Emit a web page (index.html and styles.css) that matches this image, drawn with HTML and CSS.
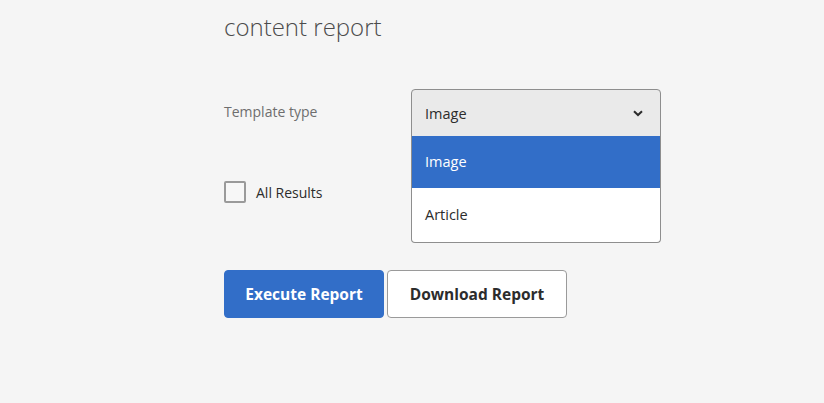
FILE: index.html
```html
<!DOCTYPE html>
<html lang="en">
<head>
  <meta charset="UTF-8">
  <title>content report</title>
  <link rel="stylesheet" href="styles.css">
</head>
<body>

<div class="report-page">
  <h1 class="page-title">content report</h1>

  <div class="form-row">
    <label class="field-label">Template type</label>
    <div class="select-wrap">
      <div class="select-box">
        <span>Image</span>
        <svg class="chevron" width="10" height="7" viewBox="0 0 10 7">
          <path d="M1 1.2 L5 5 L9 1.2" fill="none" stroke="#2c2c2c" stroke-width="2"/>
        </svg>
      </div>
      <ul class="select-menu">
        <li class="option selected">Image</li>
        <li class="option">Article</li>
      </ul>
    </div>
  </div>

  <div class="check-row">
    <span class="checkbox"></span>
    <span class="check-label">All Results</span>
  </div>

  <div class="actions">
    <button class="btn btn-primary">Execute Report</button>
    <button class="btn btn-secondary">Download Report</button>
  </div>
</div>

</body>
</html>
```

FILE: styles.css
```css
* {
  box-sizing: border-box;
  font-family: "Open Sans", Arial, sans-serif;
}
body {
  margin: 0;
  background-color: #f5f5f5;
}
.report-page {
  padding: 9px 0 0 224px;
}
.page-title {
  margin: 0;
  font-size: 24px;
  font-weight: 300;
  color: #4b4b4b;
  line-height: 36px;
}

/* template type */
.form-row {
  display: flex;
  align-items: flex-start;
  margin-top: 44px;
}
.field-label {
  width: 187px;
  font-size: 14px;
  color: #6e6e6e;
  padding-top: 13px;
}
.select-wrap {
  position: relative;
  width: 250px;
}
.select-box {
  height: 48px;
  display: flex;
  align-items: center;
  justify-content: space-between;
  padding: 1px 17px 0 13px;
  background-color: #eaeaea;
  border: 1px solid #8e8e8e;
  border-radius: 4px 4px 0 0;
  font-size: 14.5px;
  color: #2c2c2c;
}
.select-menu {
  position: absolute;
  top: 47px;
  left: 0;
  width: 250px;
  margin: 0;
  padding: 0;
  list-style: none;
  background-color: #fff;
  border: 1px solid #8e8e8e;
  border-top: none;
  border-radius: 0 0 4px 4px;
  overflow: hidden;
}
.option {
  height: 54px;
  line-height: 54px;
  padding-left: 13px;
  font-size: 14.5px;
  color: #2c2c2c;
}
.option.selected {
  background-color: #326ec8;
  color: #fff;
  height: 52px;
  line-height: 52px;
}

/* checkbox */
.check-row {
  display: flex;
  align-items: center;
  margin-top: 44px;
}
.checkbox {
  width: 22px;
  height: 22px;
  border: 2px solid #9a9a9a;
  border-radius: 2px;
  background-color: #f7f7f7;
}
.check-label {
  margin-left: 10px;
  font-size: 14px;
  color: #2c2c2c;
}

/* buttons */
.actions {
  display: flex;
  gap: 3px;
  margin-top: 67px;
}
.btn {
  height: 48px;
  border-radius: 4px;
  font-size: 15.5px;
  font-weight: 700;
  cursor: pointer;
}
.btn-primary {
  width: 160px;
  background-color: #326ec8;
  border: 1px solid #326ec8;
  color: #fff;
}
.btn-secondary {
  width: 180px;
  background-color: #fff;
  border: 1px solid #9a9a9a;
  color: #2c2c2c;
}
```
